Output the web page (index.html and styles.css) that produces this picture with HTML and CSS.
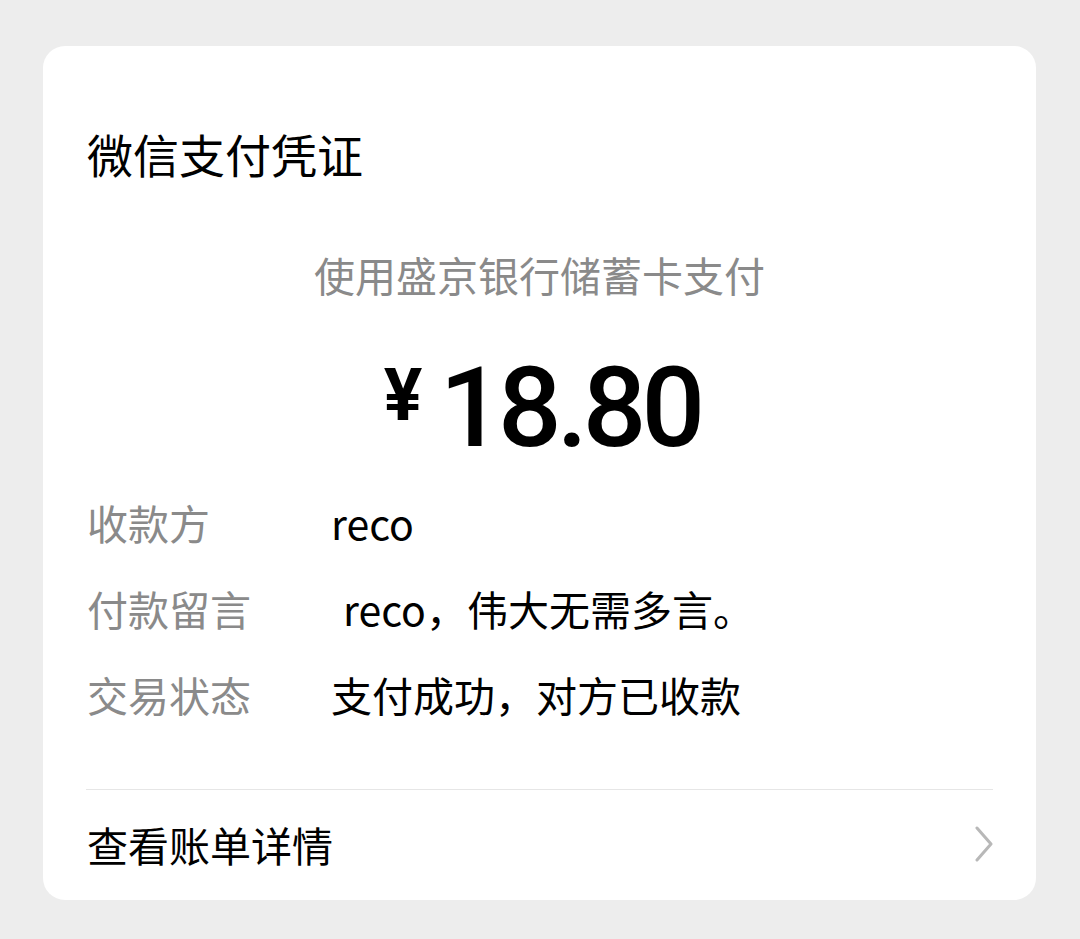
FILE: index.html
```html
<!DOCTYPE html>
<html lang="zh-CN">
<head>
<meta charset="utf-8">
<title>微信支付凭证</title>
<link rel="stylesheet" href="styles.css">
</head>
<body>
<div class="card">
  <h1 class="title">微信支付凭证</h1>
  <p class="subtitle">使用盛京银行储蓄卡支付</p>
  <div class="amount"><span class="currency">¥</span><span class="num">18.80</span></div>
  <div class="rows">
    <div class="row"><span class="label">收款方</span><span class="value">reco</span></div>
    <div class="row"><span class="label">付款留言</span><span class="value value-indent">reco，伟大无需多言。</span></div>
    <div class="row"><span class="label">交易状态</span><span class="value">支付成功，对方已收款</span></div>
  </div>
  <div class="footer">
    <span class="footer-text">查看账单详情</span>
    <svg class="chevron" width="22" height="36" viewBox="0 0 22 36"><polyline points="4,2 18,18 4,34" fill="none" stroke="#b8b8b8" stroke-width="3" stroke-linecap="round" stroke-linejoin="round"/></svg>
  </div>
</div>
</body>
</html>
```

FILE: styles.css
```css
html, body {
  margin: 0;
  padding: 0;
  background: #ededed;
}
body {
  font-family: "Noto Sans CJK SC", "Noto Sans", sans-serif;
  color: #000;
  padding: 46px 0 0 43px;
  height: 939px;
  box-sizing: border-box;
}
.card {
  width: 993px;
  height: 854px;
  background: #fff;
  border-radius: 22px;
  box-sizing: border-box;
  padding: 77px 43px 0 43px;
  display: flex;
  flex-direction: column;
}
.title {
  margin: 0;
  font-size: 46px;
  font-weight: 400;
  line-height: 60px;
  padding-left: 1px;
}
.subtitle {
  margin: 61px 0 0;
  font-size: 41px;
  line-height: 60px;
  color: #8a8a8a;
  text-align: center;
}
.amount {
  margin-top: 44px;
  height: 120px;
  display: flex;
  justify-content: center;
  align-items: baseline;
  font-family: Roboto, "Liberation Sans", sans-serif;
  color: #000;
}
.currency {
  font-size: 72px;
  font-weight: 700;
  line-height: 120px;
  margin-right: 17px;
  position: relative;
  top: -26px;
}
.num {
  font-size: 112px;
  font-weight: 500;
  line-height: 120px;
  letter-spacing: -5px;
  margin-right: -5px;
}
.rows {
  margin-top: 11px;
  display: flex;
  flex-direction: column;
}
.row {
  height: 86px;
  display: flex;
  align-items: center;
  font-size: 41px;
}
.label {
  width: 245px;
  color: #8a8a8a;
  padding-left: 1px;
  box-sizing: border-box;
}
.value {
  color: #000;
}
.value-indent {
  padding-left: 12px;
}
.footer {
  margin-top: 52px;
  border-top: 1px solid #e6e6e6;
  height: 107px;
  display: flex;
  align-items: center;
  justify-content: space-between;
}
.footer-text {
  font-size: 41px;
  padding-left: 1px;
  color: #000;
}
.chevron {
  margin-right: -2px;
}
```
